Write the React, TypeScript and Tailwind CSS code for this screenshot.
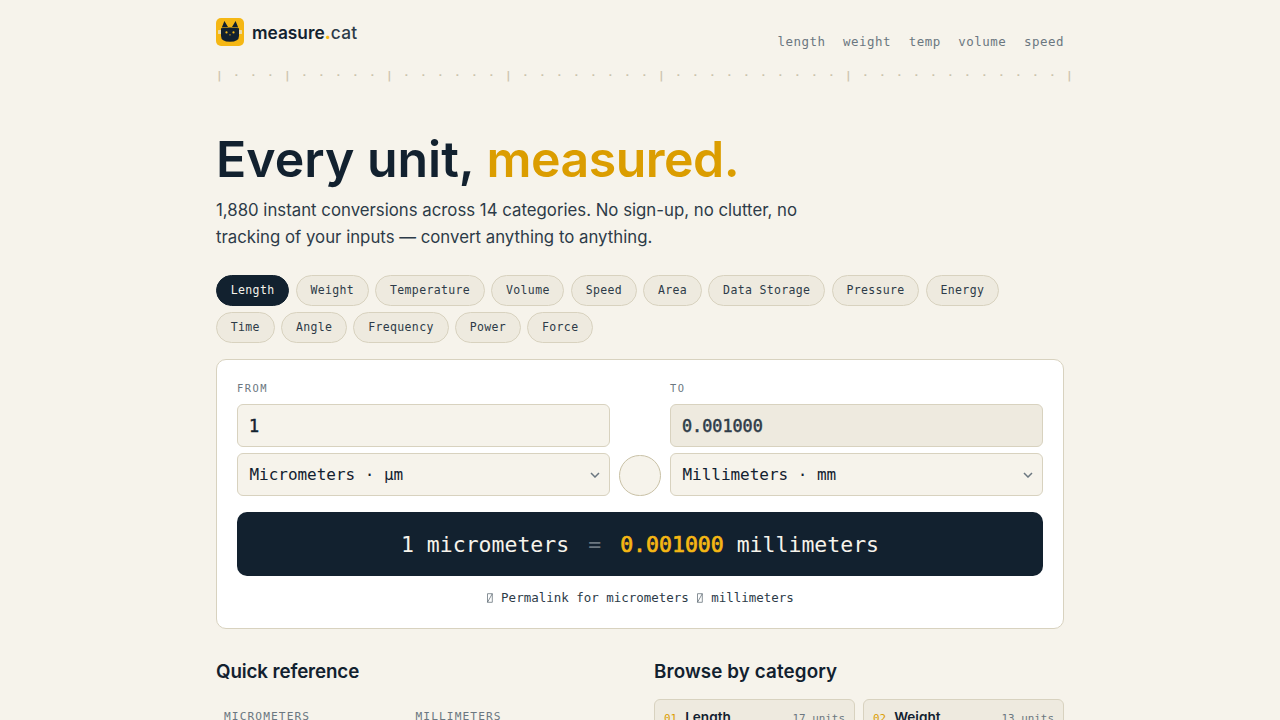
import React from 'react';

const MONO = "font-['DejaVu_Sans_Mono',monospace]";

const navLinks = ['length', 'weight', 'temp', 'volume', 'speed'];

const units = [
  'Length',
  'Weight',
  'Temperature',
  'Volume',
  'Speed',
  'Area',
  'Data Storage',
  'Pressure',
  'Energy',
  'Time',
  'Angle',
  'Frequency',
  'Power',
  'Force',
];

const categories = [
  { id: '01', name: 'Length', count: '17 units' },
  { id: '02', name: 'Weight', count: '13 units' },
];

const ruler =
  '| ' + [3, 5, 6, 8, 10, 12].map((dots) => '· '.repeat(dots) + '|').join(' ');

const CatLogo = () => (
  <svg width="28" height="28" viewBox="0 0 28 28">
    <rect width="28" height="28" rx="5" fill="#f5b714" />
    <rect x="2" y="12" width="24" height="4" rx="0.5" fill="#e9d9a8" />
    <path d="M5.8 9.4 L8.4 3 L12 9 Z M16 9 L19.6 3 L22.2 9.4 Z" fill="#12212f" />
    <path d="M5 10.2 Q14 9 23 10.2 V18 Q23 23.8 14 23.8 Q5 23.8 5 18 Z" fill="#12212f" />
    <circle cx="10.5" cy="14.4" r="1.1" fill="#f5b714" />
    <circle cx="17.5" cy="14.4" r="1.1" fill="#f5b714" />
    <path d="M13 16.6 h2 l-1 1.2 Z" fill="#f5b714" />
  </svg>
);

const MissingGlyph = () => (
  <svg className="inline-block align-[-1px]" width="7.5" height="10" viewBox="0 0 7.5 10">
    <path d="M1.5 0.7 H6.3 V9.3 H1.5 Z M1.5 9.3 L6.3 0.7" fill="none" stroke="#56636d" strokeWidth="0.7" />
  </svg>
);

const Chevron = () => (
  <svg width="10" height="6" viewBox="0 0 10 6">
    <path d="M1 1 L5 5 L9 1" fill="none" stroke="#6b7780" strokeWidth="1.5" />
  </svg>
);

const UnitSelect = ({ label }: { label: string }) => (
  <div className="mt-1.5 flex h-[43px] items-center justify-between rounded-md border border-[#d8d2bf] bg-[#f6f3eb] pr-[9px] pl-[11.5px] text-[16px] tracking-[-0.03px]">
    <span className="whitespace-pre">{label}</span>
    <Chevron />
  </div>
);

export default function App() {
  return (
    <div className="h-screen overflow-hidden bg-[#f6f3eb] font-[Inter,sans-serif] text-[#12212f]">
      <div className="mx-auto w-[848px]">
        <header className="flex h-[64px] items-start justify-between pt-[18px]">
          <div className="flex h-7 items-center gap-2">
            <CatLogo />
            <span className="pt-[1px] text-[17.3px] leading-7 font-semibold">
              measure<span className="font-extrabold text-[#f5b714]">.</span>
              <span className="font-medium tracking-[0.3px] text-[#2d3b48]">cat</span>
            </span>
          </div>
          <nav className={`${MONO} flex gap-[17.6px] pt-[15px] text-[12.48px] leading-[18px] tracking-[0.5px] text-[#6b7780]`}>
            {navLinks.map((link) => (
              <a key={link}>{link}</a>
            ))}
          </nav>
        </header>

        <div className={`${MONO} h-6 pt-px text-[11.2px] leading-[22px] tracking-[1.765px] whitespace-pre text-[#c9c1a6] [-webkit-text-stroke:0.2px]`}>
          {ruler}
        </div>

        <h1 className="mt-[43px] text-[50px] leading-[56px] font-semibold">
          Every unit, <span className="tracking-[-0.5px] text-[#db9d00]">measured.</span>
        </h1>
        <p className="mt-[10px] w-[600px] text-[16.8px] leading-[27px] text-[#2d3b48]">
          1,880 instant conversions across 14 categories. No sign-up, no clutter, no tracking of your inputs — convert
          anything to anything.
        </p>

        <div className={`${MONO} mt-6 flex flex-wrap gap-x-[6.4px] gap-y-1.5 pr-1 text-[11.52px] tracking-[0.34px]`}>
          {units.map((unit, i) => (
            <span
              key={unit}
              className={
                i === 0
                  ? 'flex h-[31px] items-center rounded-full border border-[#12212f] bg-[#12212f] px-[13.8px] text-[#f6f3eb]'
                  : 'flex h-[31px] items-center rounded-full border border-[#d8d2bf] bg-[#eeeadf] px-[13.8px] text-[#2d3b48]'
              }
            >
              {unit}
            </span>
          ))}
        </div>

        <section className={`${MONO} mt-4 h-[270px] rounded-[10px] border border-[#d8d2bf] bg-white px-5`}>
          <div className="grid grid-cols-[1fr_42px_1fr] items-end gap-[9px] pt-5">
            <div>
              <div className="h-6 text-[10.4px] leading-4 tracking-[1.5px] text-[#6b7780]">FROM</div>
              <div className="flex h-[43px] items-center rounded-md border border-[#d8d2bf] bg-[#f6f3eb] px-[11px] pt-0.5 text-[16.8px] [-webkit-text-stroke:0.5px]">
                1
              </div>
              <UnitSelect label="Micrometers · µm" />
            </div>
            <div className="h-[41px] rounded-full border border-[#c9c1a6] bg-[#f6f3eb]" />
            <div>
              <div className="h-6 text-[10.4px] leading-4 tracking-[1.5px] text-[#6b7780]">TO</div>
              <div className="flex h-[43px] items-center rounded-md border border-[#d8d2bf] bg-[#eeeadf] px-[11px] pt-0.5 text-[16.8px] text-[#2d3b48] [-webkit-text-stroke:0.5px]">
                0.001000
              </div>
              <UnitSelect label="Millimeters · mm" />
            </div>
          </div>

          <div className="mt-4 flex h-16 items-center justify-center rounded-[10px] bg-[#12212f] pt-0.5 text-[21.5px] whitespace-pre text-[#f6f3eb]">
            <span>1 micrometers</span>
            <span className="mx-[19px] text-[#6b7780]">=</span>
            <span className="text-[#f5b714] [-webkit-text-stroke:0.7px]">0.001000</span>
            <span> millimeters</span>
          </div>
          <div className="mt-3 text-center text-[12.48px] leading-5 text-[#2d3b48]">
            <MissingGlyph /> Permalink for micrometers <MissingGlyph /> millimeters
          </div>
        </section>

        <div className="mt-[29px] grid grid-cols-[410px_410px] gap-7">
          <section>
            <h2 className="text-[18.8px] leading-7 font-semibold tracking-[-0.13px]">Quick reference</h2>
            <div className={`${MONO} mt-[22px] grid grid-cols-[191.5px_1fr] pl-2 text-[11.2px] leading-[18px] tracking-[1.1px] text-[#6b7780]`}>
              <span>MICROMETERS</span>
              <span>MILLIMETERS</span>
            </div>
          </section>
          <section>
            <h2 className="text-[18.8px] leading-7 font-semibold tracking-[0.12px]">Browse by category</h2>
            <div className="mt-[13px] grid grid-cols-2 gap-2">
              {categories.map((category) => (
                <div
                  key={category.id}
                  className="flex h-10 items-baseline rounded-md border border-[#d8d2bf] bg-[#eeeadf] px-[9px] pt-[7px]"
                >
                  <span className={`${MONO} text-[10.9px] text-[#db9d00]`}>{category.id}</span>
                  <span className="ml-2 text-[13.6px] leading-5 font-semibold">{category.name}</span>
                  <span className={`${MONO} ml-auto text-[10.9px] text-[#6b7780]`}>{category.count}</span>
                </div>
              ))}
            </div>
          </section>
        </div>
      </div>
    </div>
  );
}
